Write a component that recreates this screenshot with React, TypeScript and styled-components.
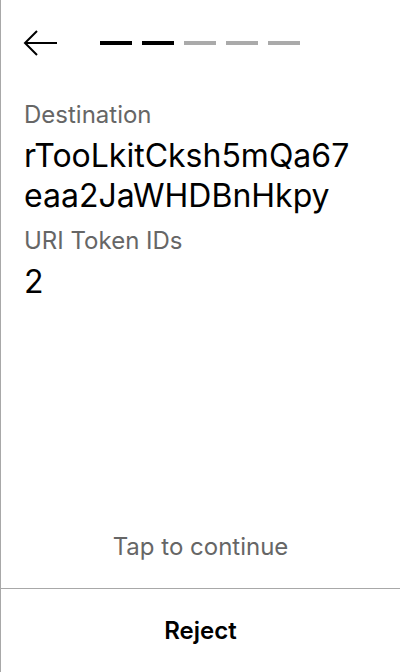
import React from "react";
import styled, { createGlobalStyle } from "styled-components";

const Global = createGlobalStyle`
  html, body { margin: 0; padding: 0; background: #fff; }
  body { font-family: Inter, "Noto Sans", sans-serif; -webkit-font-smoothing: antialiased; }
`;

const Screen = styled.div`
  width: 400px;
  height: 672px;
  box-sizing: border-box;
  border-left: 1px solid #a8a8a8;
  display: flex;
  flex-direction: column;
  background: #fff;
`;

const Header = styled.div`
  display: flex;
  align-items: center;
  padding: 29px 0 0 22px;
  height: 28px;
`;

const BackButton = styled.button`
  border: none;
  background: none;
  padding: 0;
  width: 34px;
  height: 28px;
  display: flex;
  align-items: center;
  cursor: pointer;
`;

const Steps = styled.div`
  display: flex;
  gap: 10px;
  margin-left: 43px;
  margin-top: -1px;
`;

const Step = styled.div<{ $done: boolean }>`
  width: 32px;
  height: 4px;
  background: ${(p) => (p.$done ? "#000" : "#aaaaaa")};
`;

const Content = styled.div`
  padding: 43px 23px 0 23px;
  flex: 1;
  display: flex;
  flex-direction: column;
  gap: 10px;
`;

const Field = styled.div`
  display: flex;
  flex-direction: column;
  gap: 6px;
`;

const Label = styled.div`
  font-size: 24px;
  line-height: 30px;
  color: #666;
`;

const Value = styled.div`
  font-size: 32px;
  line-height: 40px;
  color: #000;
  max-width: 335px;
  word-break: break-all;
`;

const Hint = styled.div`
  text-align: center;
  font-size: 24px;
  color: #666;
  line-height: 30px;
  padding-bottom: 26px;
`;

const Footer = styled.div`
  border-top: 1px solid #a8a8a8;
  height: 83px;
  display: flex;
  align-items: center;
  justify-content: center;
`;

const RejectButton = styled.button`
  border: none;
  background: none;
  font-family: Inter, sans-serif;
  font-size: 24px;
  font-weight: 600;
  color: #000;
  cursor: pointer;
`;

const steps = [true, true, false, false, false];

export default function App() {
  return (
    <>
      <Global />
      <Screen>
        <Header>
          <BackButton aria-label="Back">
            <svg width="34" height="28" viewBox="0 0 34 28" fill="none">
              <path d="M2 14H34M14 2L2 14L14 26" stroke="#000" strokeWidth="2" />
            </svg>
          </BackButton>
          <Steps>
            {steps.map((d, i) => (
              <Step key={i} $done={d} />
            ))}
          </Steps>
        </Header>
        <Content>
          <Field>
            <Label>Destination</Label>
            <Value>rTooLkitCksh5mQa67eaa2JaWHDBnHkpy</Value>
          </Field>
          <Field>
            <Label>URI Token IDs</Label>
            <Value>2</Value>
          </Field>
        </Content>
        <Hint>Tap to continue</Hint>
        <Footer>
          <RejectButton>Reject</RejectButton>
        </Footer>
      </Screen>
    </>
  );
}
